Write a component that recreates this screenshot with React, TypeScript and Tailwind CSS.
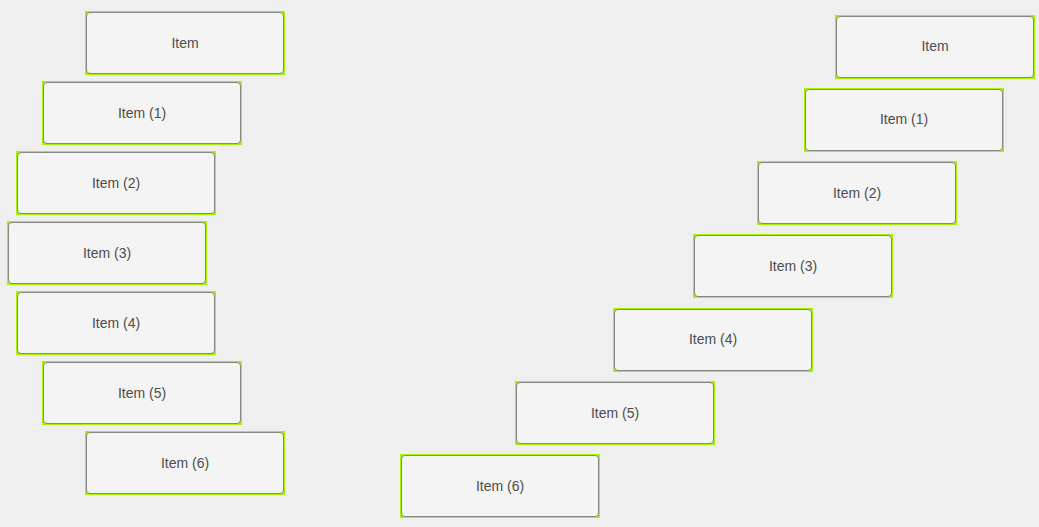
const leftOffsets = [85, 42, 16, 7, 16, 42, 85]
const rightOffsets = [435, 404, 357, 293, 213, 115, 0]

function label(i: number) {
  return i === 0 ? 'Item' : `Item (${i})`
}

function Item({ text, offset }: { text: string; offset: number }) {
  return (
    <div className="w-[200px] h-[64px] bg-[#a6f000] p-px shrink-0" style={{ marginLeft: offset }}>
      <div className="w-full h-full rounded-[4px] border border-[#858a80] bg-[#f4f4f4] flex items-center justify-center text-[14px] text-[#4d4d4d]">
        {text}
      </div>
    </div>
  )
}

export default function App() {
  return (
    <div className="w-[1039px] h-[527px] bg-[#efefef] flex overflow-hidden" style={{ fontFamily: '"Liberation Sans", Arial, sans-serif' }}>
      <div className="w-[400px] shrink-0 flex flex-col gap-[6px] pt-[11px]">
        {leftOffsets.map((x, i) => (
          <Item key={i} text={label(i)} offset={x} />
        ))}
      </div>
      <div className="flex-1 flex flex-col gap-[9.33px] pt-[14.5px]">
        {rightOffsets.map((x, i) => (
          <Item key={i} text={label(i)} offset={x} />
        ))}
      </div>
    </div>
  )
}
